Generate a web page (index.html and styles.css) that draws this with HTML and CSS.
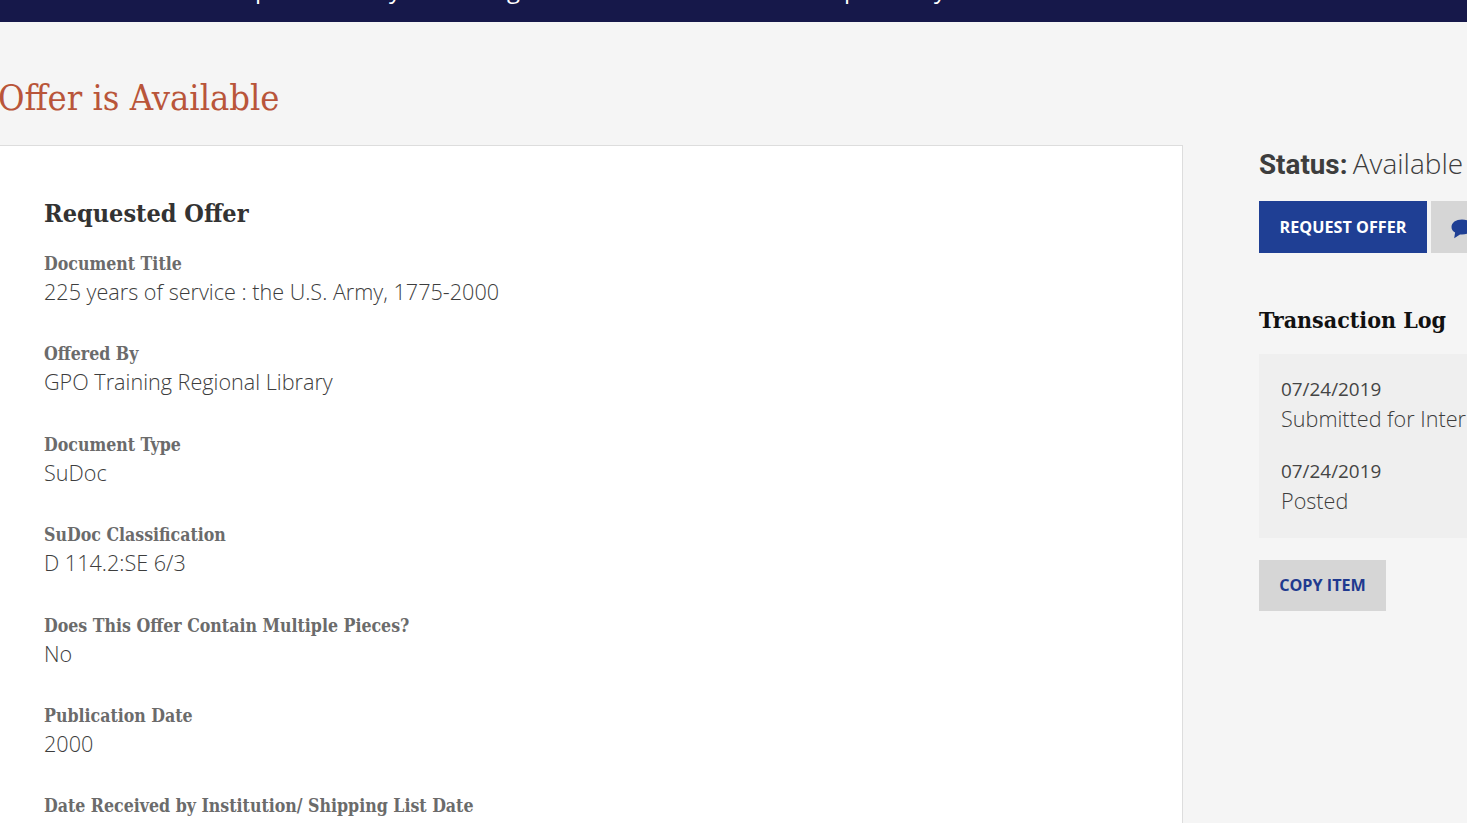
FILE: index.html
```html
<!DOCTYPE html>
<html lang="en">
<head>
    <meta charset="UTF-8">
    <meta name="viewport" content="width=device-width, initial-scale=1.0">
    <title>Offer is Available</title>
    <link rel="stylesheet" href="styles.css">
</head>
<body>
    <nav class="topbar">
        <span class="nav-item nav-a">p</span>
        <span class="nav-item nav-b">y</span>
        <span class="nav-item nav-c">g</span>
        <span class="nav-item nav-d">p</span>
        <span class="nav-item nav-e">y</span>
    </nav>

    <div class="page">
        <h1 class="page-title">Offer is Available</h1>

        <div class="columns">
            <main class="card">
                <h2 class="card-title">Requested Offer</h2>

                <div class="field">
                    <div class="field-label">Document Title</div>
                    <div class="field-value">225 years of service : the U.S. Army, 1775-2000</div>
                </div>
                <div class="field">
                    <div class="field-label">Offered By</div>
                    <div class="field-value">GPO Training Regional Library</div>
                </div>
                <div class="field">
                    <div class="field-label">Document Type</div>
                    <div class="field-value">SuDoc</div>
                </div>
                <div class="field">
                    <div class="field-label">SuDoc Classification</div>
                    <div class="field-value">D 114.2:SE 6/3</div>
                </div>
                <div class="field">
                    <div class="field-label">Does This Offer Contain Multiple Pieces?</div>
                    <div class="field-value">No</div>
                </div>
                <div class="field">
                    <div class="field-label">Publication Date</div>
                    <div class="field-value">2000</div>
                </div>
                <div class="field">
                    <div class="field-label">Date Received by Institution/ Shipping List Date</div>
                </div>
            </main>

            <aside class="sidebar">
                <div class="status"><strong>Status:</strong> Available</div>

                <div class="actions">
                    <button class="btn btn-primary">Request Offer</button>
                    <button class="btn btn-icon" aria-label="Comment">
                        <svg width="22" height="20" viewBox="0 0 22 20"><path d="M11 0.5C5 0.5 0.5 3.6 0.5 8c0 2.4 1.3 4.3 3.6 5.6L3.2 19.2 9 15.4c.7.1 1.3.1 2 .1 6 0 10.5-3.1 10.5-7.5S17 .5 11 .5z"/></svg>
                    </button>
                </div>

                <h3 class="log-title">Transaction Log</h3>
                <div class="log">
                    <div class="log-entry">
                        <div class="log-date">07/24/2019</div>
                        <div class="log-text">Submitted for Inter</div>
                    </div>
                    <div class="log-entry">
                        <div class="log-date">07/24/2019</div>
                        <div class="log-text">Posted</div>
                    </div>
                </div>

                <button class="btn btn-grey">Copy Item</button>
            </aside>
        </div>
    </div>
</body>
</html>
```

FILE: styles.css
```css
html, body {
    height: 100%;
}

body {
    margin: 0;
    background-color: #f5f5f5;
    font-family: 'Open Sans', sans-serif;
    color: #3d3d3d;
    overflow: hidden;
}

.topbar {
    height: 22px;
    background-color: #16184a;
    display: flex;
    align-items: flex-end;
    overflow: hidden;
}

.nav-item {
    flex: none;
    width: 0;
    color: #fff;
    font-size: 24px;
    line-height: 40px;
    margin-bottom: 13px;
}

.nav-a { margin-left: 255px; }
.nav-b { margin-left: 134px; }
.nav-c { margin-left: 118px; }
.nav-d { margin-left: 337px; }
.nav-e { margin-left: 90px; }

.page {
    margin-left: -20px;
    width: 1700px;
}

.page-title {
    margin: 0;
    padding: 53px 0 24px 18px;
    font-family: 'DejaVu Serif Condensed', 'DejaVu Serif', serif;
    font-weight: 400;
    font-size: 36px;
    line-height: 46px;
    color: #b9553a;
}

.columns {
    display: flex;
    align-items: flex-start;
    gap: 76px;
}

.card {
    width: 1203px;
    height: 700px;
    box-sizing: border-box;
    background-color: #fff;
    border-top: 1px solid #ddd;
    border-right: 1px solid #ddd;
    padding: 51px 0 0 64px;
}

.card-title {
    margin: 0 0 21px;
    font-family: 'DejaVu Serif Condensed', 'DejaVu Serif', serif;
    font-weight: 700;
    font-size: 25px;
    line-height: 34px;
    color: #333;
}

.field {
    margin-bottom: 35.4px;
}

.field-label {
    font-family: 'DejaVu Serif Condensed', 'DejaVu Serif', serif;
    font-weight: 700;
    font-size: 17.6px;
    line-height: 24px;
    color: #6b6b6b;
}

.field-value {
    padding-top: 1px;
    font-weight: 300;
    font-size: 21.6px;
    line-height: 30px;
}

.sidebar {
    width: 360px;
    flex: none;
}

.status {
    font-weight: 300;
    font-size: 28px;
    line-height: 37px;
    word-spacing: -2px;
    white-space: nowrap;
}

.status strong {
    font-family: Roboto, sans-serif;
    font-weight: 700;
    font-size: 27.8px;
}

.actions {
    display: flex;
    gap: 4px;
    margin-top: 18px;
}

.btn {
    font-family: 'Open Sans', sans-serif;
    font-weight: 700;
    font-size: 16.2px;
    text-transform: uppercase;
    border: none;
    padding: 0;
    cursor: pointer;
}

.btn-primary {
    width: 168px;
    height: 52px;
    background-color: #1f3f94;
    color: #fff;
}

.btn-icon {
    width: 70px;
    height: 52px;
    background-color: #d6d6d6;
    text-align: left;
    padding-left: 20px;
}

.btn-icon svg {
    display: block;
    margin-top: 4px;
    fill: #1f3f94;
}

.log-title {
    margin: 47px 0 14px;
    font-family: 'DejaVu Serif Condensed', 'DejaVu Serif', serif;
    font-weight: 700;
    font-size: 23px;
    line-height: 40px;
    color: #111;
}

.log {
    background-color: #efefef;
    padding: 21px 22px 21px;
    white-space: nowrap;
}

.log-entry + .log-entry {
    margin-top: 22px;
}

.log-date {
    font-size: 18.9px;
    line-height: 28px;
    color: #444;
}

.log-text {
    font-weight: 300;
    font-size: 21.6px;
    line-height: 32px;
}

.btn-grey {
    display: block;
    margin-top: 22px;
    padding-bottom: 2px;
    width: 127px;
    height: 51px;
    background-color: #d6d6d6;
    color: #1f3a8f;
}
```
